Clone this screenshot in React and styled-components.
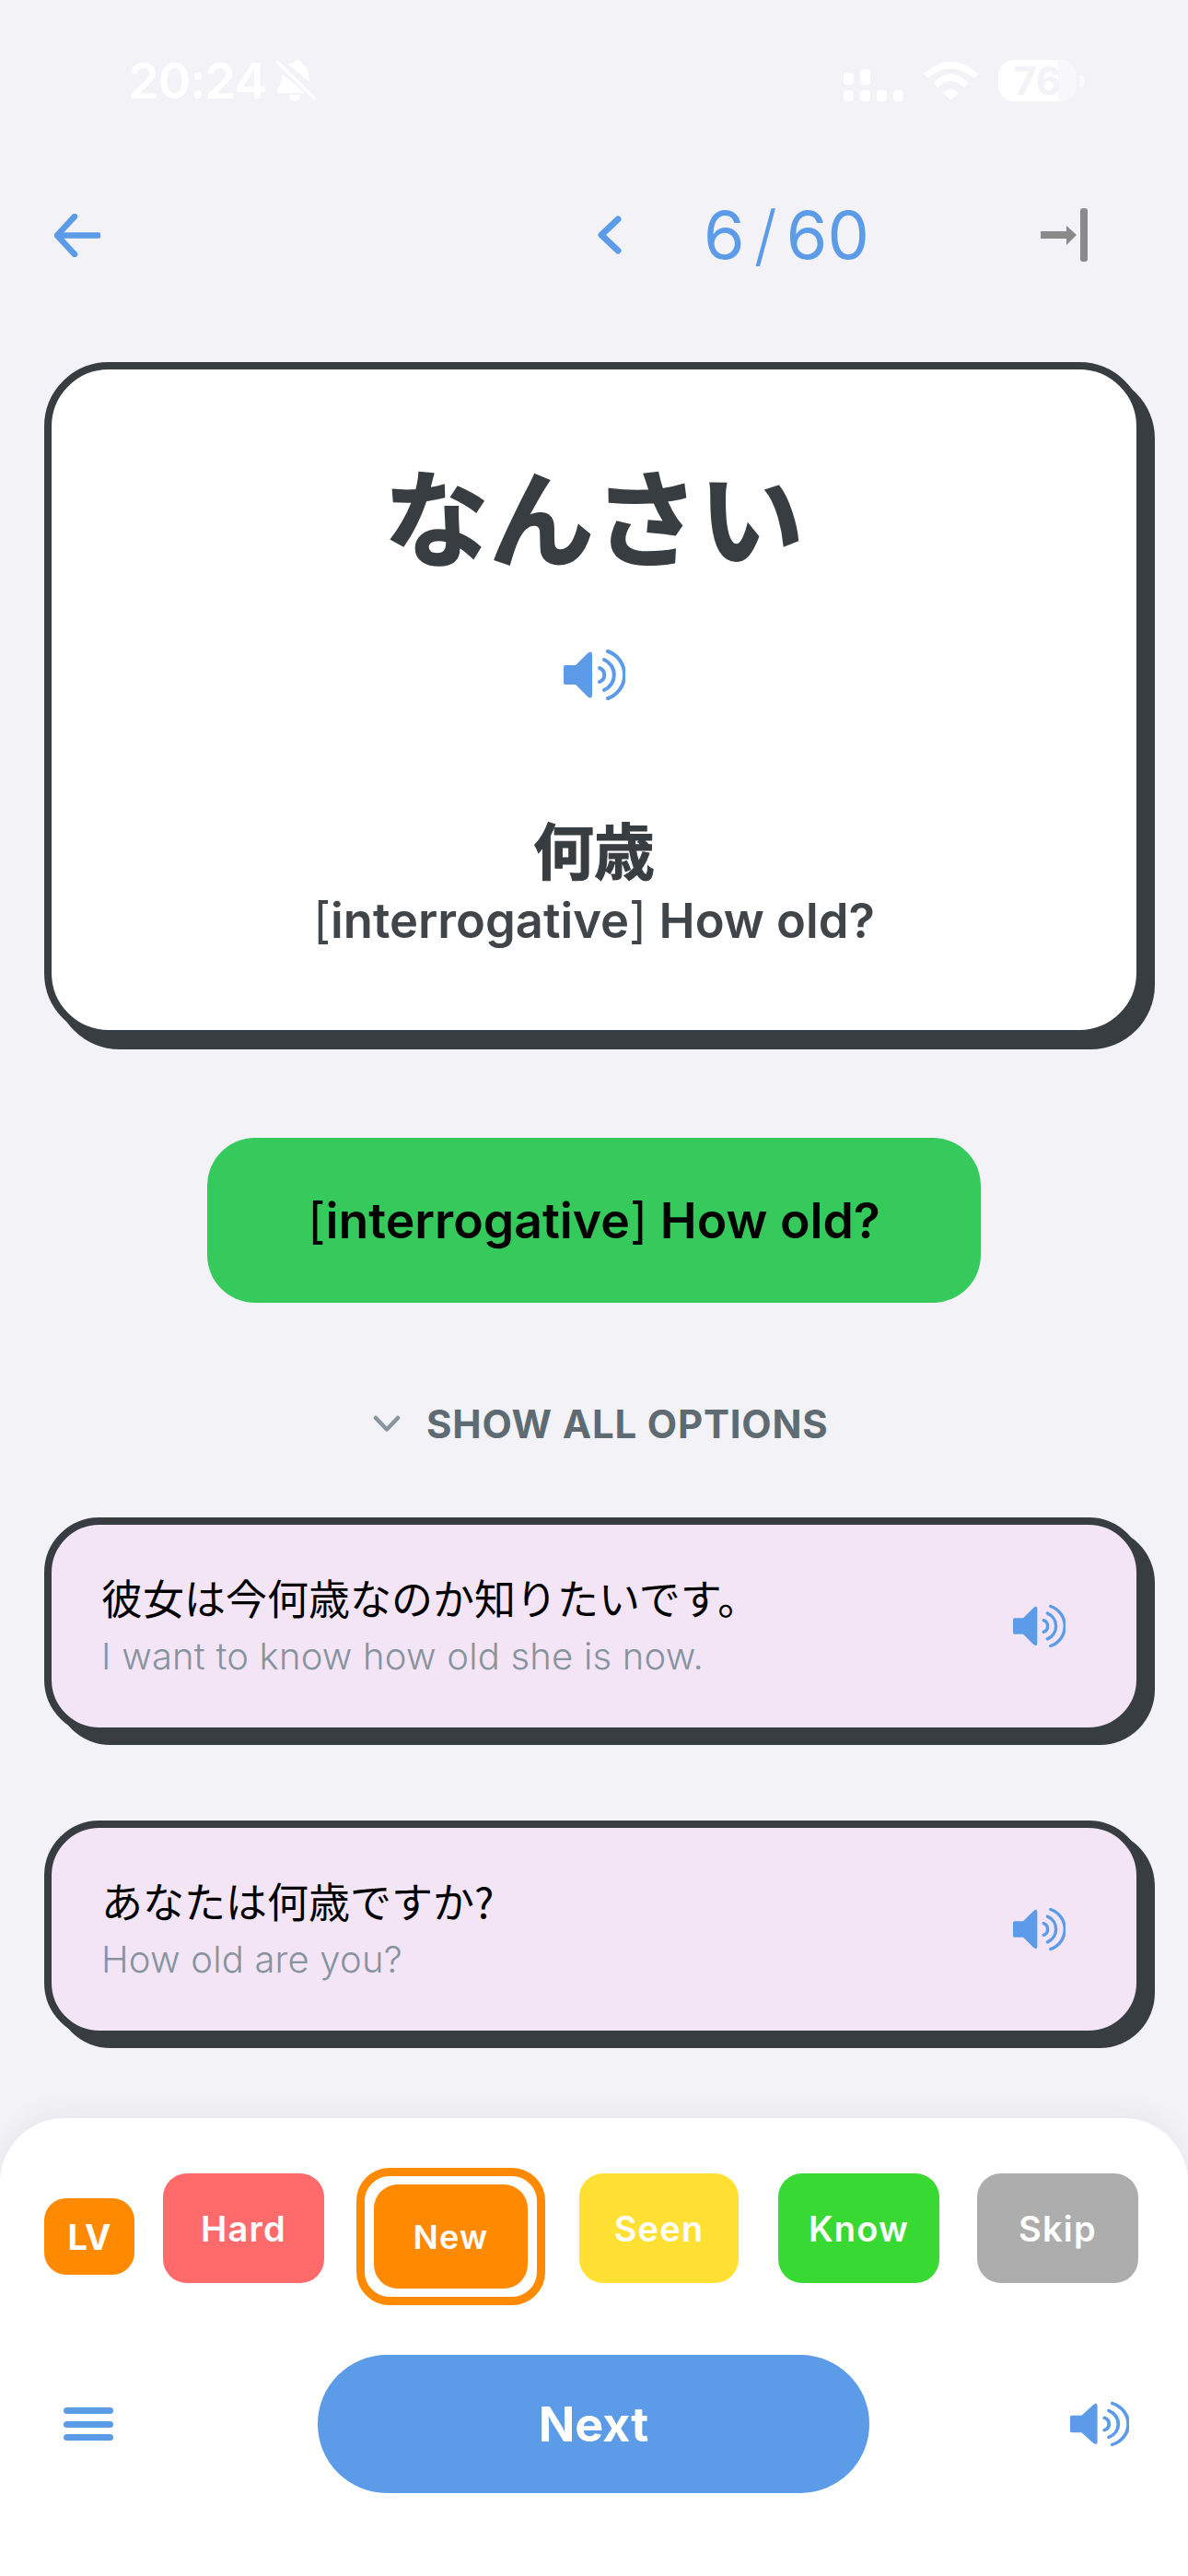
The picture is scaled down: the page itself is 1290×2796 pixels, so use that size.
import styled, { createGlobalStyle } from 'styled-components';

const BLUE = '#5b9be8';
const INK = '#383d41';
const BG = '#f2f2f7';
const FONT = '"Inter", "Noto Sans CJK JP", sans-serif';
const JP = '"Noto Sans CJK JP", "Inter", sans-serif';

const Global = createGlobalStyle`
  * { box-sizing: border-box; }
  html, body { margin: 0; padding: 0; background: ${BG}; }
  body { font-family: ${FONT}; }
`;

const Page = styled.div`
  width: 1290px;
  height: 2796px;
  overflow: hidden;
  background: ${BG};
  display: flex;
  flex-direction: column;
`;

const StatusBar = styled.div`
  display: flex;
  justify-content: space-between;
  align-items: center;
  height: 47px;
  margin-top: 64px;
  padding: 0 113px 0 139px;
  color: #fff;
`;

const StatusLeft = styled.div`
  display: flex;
  align-items: center;
  gap: 11px;
`;

const Time = styled.span`
  font-size: 54px;
  font-weight: 600;
  line-height: 47px;
  letter-spacing: -1px;
`;

const StatusRight = styled.div`
  display: flex;
  align-items: center;
`;

const Battery = styled.div`
  width: 85px;
  height: 45px;
  margin-left: 22px;
  border-radius: 17px;
  background: linear-gradient(90deg, #fff 65px, rgba(255, 255, 255, 0.45) 65px);
  color: ${BG};
  font-size: 42px;
  font-weight: 700;
  line-height: 45px;
  text-align: center;
`;

const BatteryNub = styled.div`
  width: 5px;
  height: 14px;
  margin-left: 3px;
  border-radius: 0 5px 5px 0;
  background: rgba(255, 255, 255, 0.6);
`;

const Nav = styled.div`
  display: grid;
  grid-template-columns: 589px 119px 363px 51px;
  align-items: center;
  height: 66px;
  margin-top: 111px;
  padding-left: 59px;
`;

const Counter = styled.div`
  margin-left: -3px;
  color: ${BLUE};
  font-size: 72px;
  font-weight: 400;
  line-height: 66px;
  white-space: nowrap;
`;

const Slash = styled.span`
  margin: 0 10px;
  font-weight: 300;
`;

const Card = styled.div`
  width: 1194px;
  height: 733px;
  margin: 105px 0 0 48px;
  border: 8px solid ${INK};
  border-radius: 70px;
  background: #fff;
  box-shadow: 12px 13px 0 ${INK};
  display: flex;
  flex-direction: column;
  align-items: center;
`;

const Reading = styled.h1`
  margin: 91px 0 0;
  color: ${INK};
  font-family: ${JP};
  font-size: 114px;
  font-weight: 700;
  line-height: 130px;
  -webkit-text-stroke: 1.5px ${INK};
`;

const CardSpeaker = styled.div`
  margin-top: 82px;
  height: 57px;
`;

const Kanji = styled.div`
  margin-top: 119px;
  color: ${INK};
  font-family: ${JP};
  font-size: 66px;
  font-weight: 700;
  line-height: 80px;
  -webkit-text-stroke: 1px ${INK};
`;

const Meaning = styled.div`
  margin-top: 9px;
  color: #3f4549;
  font-size: 52.5px;
  font-weight: 600;
  line-height: 60px;
`;

const Bracket = styled.span`
  font-weight: 400;
`;

const Answer = styled.div`
  width: 840px;
  height: 179px;
  margin: 109px 0 0 225px;
  border-radius: 52px;
  background: #36c95c;
  color: #000;
  font-size: 53.5px;
  font-weight: 600;
  display: flex;
  align-items: center;
  justify-content: center;
`;

const ShowAll = styled.div`
  display: flex;
  align-items: center;
  gap: 28px;
  margin: 107px 0 0 405px;
  height: 48px;
  color: #5f6b72;
  font-size: 42px;
  font-weight: 700;
  letter-spacing: 0.8px;
`;

const OptionList = styled.div`
  display: flex;
  flex-direction: column;
  gap: 93px;
  margin: 78px 0 0 48px;
`;

const Option = styled.div`
  width: 1194px;
  height: 236px;
  padding: 0 77px 0 54px;
  border: 8px solid ${INK};
  border-radius: 60px;
  background: #f3e5f5;
  box-shadow: 12px 11px 0 ${INK};
  display: flex;
  align-items: center;
  justify-content: space-between;
`;

const OptionText = styled.div`
  display: flex;
  flex-direction: column;
  gap: 11px;
  padding-bottom: 2px;
`;

const Sentence = styled.div`
  color: #000;
  font-family: ${JP};
  font-size: 45px;
  font-weight: 400;
  line-height: 56px;
`;

const Translation = styled.div`
  color: #87939f;
  font-size: 40px;
  font-weight: 300;
  line-height: 50px;
  letter-spacing: 0.2px;
`;

const Sheet = styled.div`
  margin-top: auto;
  height: 497px;
  padding: 54px 54px 0 48px;
  border-radius: 70px 70px 0 0;
  background: #fff;
  box-shadow: 0 -6px 30px rgba(0, 0, 0, 0.05);
`;

const Levels = styled.div`
  display: grid;
  grid-template-columns: 129px 210px 242px 216px 216px 175px;
  height: 149px;
`;

const Level = styled.div`
  display: flex;
  align-items: center;
  justify-content: center;
  border-radius: 26px;
  background: ${p => p.$color};
  color: #fff;
  font-size: ${p => (p.$inner ? 36 : 38)}px;
  font-weight: 600;
  letter-spacing: 1.2px;
  ${p => (p.$inner ? 'width: 100%; height: 100%;' : `width: ${p.$width || 175}px; height: 119px; margin-top: 6px;`)}
`;

const LevelBadge = styled.div`
  width: 98px;
  height: 83px;
  align-self: center;
  border-radius: 24px;
  background: #ff8a00;
  color: #fff;
  font-size: 38px;
  font-weight: 700;
  display: flex;
  align-items: center;
  justify-content: center;
`;

const Selected = styled.div`
  width: 205px;
  height: 149px;
  padding: 9px 10px;
  border: 9px solid #ff8a00;
  border-radius: 36px;
`;

const Actions = styled.div`
  display: grid;
  grid-template-columns: 276px 599px 1fr;
  align-items: center;
  height: 150px;
  margin: 54px 0 0 21px;
`;

const Burger = styled.div`
  display: flex;
  flex-direction: column;
  gap: 7.5px;
  width: 54px;
`;

const BurgerBar = styled.div`
  height: 7px;
  border-radius: 4px;
  background: ${BLUE};
`;

const Next = styled.div`
  height: 150px;
  border-radius: 75px;
  background: ${BLUE};
  color: #fff;
  font-size: 52px;
  font-weight: 700;
  display: flex;
  align-items: center;
  justify-content: center;
`;

const ActionSpeaker = styled.div`
  justify-self: end;
  height: 50px;
  margin-right: 10px;
`;

function Speaker({ width = 67, height = 57 }) {
  return (
    <svg width={width} height={height} viewBox="0 0 67 57" preserveAspectRatio="none" style={{ display: 'block' }}>
      <path d="M2 18 H13 L26 5 Q31 1 31 7 V50 Q31 56 26 52 L13 39 H2 Q0 39 0 37 V20 Q0 18 2 18Z" fill={BLUE} />
      <g fill="none" stroke={BLUE} strokeWidth="4" strokeLinecap="round">
        <path d="M39 21 A8 8 0 0 1 39 36" />
        <path d="M44 12 A18 18 0 0 1 44 45" />
        <path d="M48 3 A27 27 0 0 1 48 54" />
      </g>
    </svg>
  );
}

function BackArrow() {
  return (
    <svg width="50" height="47" viewBox="0 0 50 47">
      <path d="M22 3 L3 23.5 L22 44 M3 23.5 H48" fill="none" stroke={BLUE} strokeWidth="6.5" strokeLinecap="round" strokeLinejoin="round" />
    </svg>
  );
}

function PrevChevron() {
  return (
    <svg width="27" height="42" viewBox="0 0 27 42">
      <path d="M23 4 L5 21 L23 38" fill="none" stroke={BLUE} strokeWidth="7" strokeLinecap="round" strokeLinejoin="round" />
    </svg>
  );
}

function SkipEnd() {
  return (
    <svg width="51" height="58" viewBox="0 0 51 58" fill="#8a8a8a">
      <rect x="0" y="25" width="30" height="8" />
      <polygon points="28,19 39,29 28,40" />
      <rect x="43" y="0" width="8" height="58" rx="3" />
    </svg>
  );
}

function ChevronDown() {
  return (
    <svg width="30" height="19" viewBox="0 0 30 19">
      <path d="M3 3 L15 15.5 L27 3" fill="none" stroke="#87959f" strokeWidth="4.5" strokeLinecap="round" strokeLinejoin="round" />
    </svg>
  );
}

function MutedBell() {
  return (
    <svg width="42" height="46" viewBox="0 0 42 46" fill="#fff">
      <path d="M13 5 Q17 3 19 3 Q20 -1 24 0 Q28 1 28 4 Q35 8 35 18 L36 24 Z" />
      <path d="M6 15 L31 36 H3 Q0 35 1 32 Q6 26 6 15Z" />
      <path d="M14 38 H26 Q25 45 20 45 Q15 45 14 38Z" />
      <path d="M1 2 L41 41" stroke="#fff" strokeWidth="3.5" strokeLinecap="round" />
    </svg>
  );
}

function Signal() {
  return (
    <svg width="65" height="45" viewBox="0 0 65 45" fill="#fff">
      <rect x="54" y="0" width="11" height="27" rx="4" opacity="0.2" />
      <rect x="36" y="5" width="11" height="22" rx="4" opacity="0.2" />
      <rect x="18" y="10" width="11" height="17" rx="4" />
      <rect x="0" y="14" width="11" height="13" rx="4" />
      <rect x="0" y="33" width="11" height="12" rx="4" />
      <rect x="18" y="33" width="11" height="12" rx="4" />
      <rect x="36" y="33" width="11" height="12" rx="4" />
      <rect x="54" y="33" width="11" height="12" rx="4" />
    </svg>
  );
}

function Wifi() {
  return (
    <svg width="59" height="42" viewBox="0 0 59 42" fill="#fff" style={{ marginLeft: 22 }}>
      <path d="M0 13 Q29.5 -13 59 13 L55 18 Q29.5 -3 4 18 Z" />
      <path d="M10.5 23 Q29.5 3 48.5 23 L44 28 Q29.5 14 15 28 Z" />
      <path d="M21 34 Q29.5 26 38 34 L29.5 42 Z" />
    </svg>
  );
}

const Bracketed = ({ children }) => (
  <>
    <Bracket>[</Bracket>{children}<Bracket>]</Bracket> How old?
  </>
);

const options = [
  { jp: '彼女は今何歳なのか知りたいです。', en: 'I want to know how old she is now.' },
  { jp: 'あなたは何歳ですか?', en: 'How old are you?' },
];

const levels = [
  { label: 'Hard', color: '#ff6b6b' },
  { label: 'New', color: '#ff8a00', selected: true },
  { label: 'Seen', color: '#ffe033', width: 173 },
  { label: 'Know', color: '#38d932' },
  { label: 'Skip', color: '#adadad' },
];

export default function App() {
  return (
    <Page>
      <Global />
      <StatusBar>
        <StatusLeft>
          <Time>20:24</Time>
          <MutedBell />
        </StatusLeft>
        <StatusRight>
          <Signal />
          <Wifi />
          <Battery>76</Battery>
          <BatteryNub />
        </StatusRight>
      </StatusBar>

      <Nav>
        <BackArrow />
        <PrevChevron />
        <Counter>6<Slash>/</Slash>60</Counter>
        <SkipEnd />
      </Nav>

      <Card>
        <Reading>なんさい</Reading>
        <CardSpeaker><Speaker /></CardSpeaker>
        <Kanji>何歳</Kanji>
        <Meaning><Bracketed>interrogative</Bracketed></Meaning>
      </Card>

      <Answer><span><Bracketed>interrogative</Bracketed></span></Answer>

      <ShowAll>
        <ChevronDown />
        SHOW ALL OPTIONS
      </ShowAll>

      <OptionList>
        {options.map(o => (
          <Option key={o.en}>
            <OptionText>
              <Sentence>{o.jp}</Sentence>
              <Translation>{o.en}</Translation>
            </OptionText>
            <Speaker width={57} height={48} />
          </Option>
        ))}
      </OptionList>

      <Sheet>
        <Levels>
          <LevelBadge>LV</LevelBadge>
          {levels.map(l => (
            l.selected ? (
              <Selected key={l.label}>
                <Level $color={l.color} $inner>{l.label}</Level>
              </Selected>
            ) : (
              <Level key={l.label} $color={l.color} $width={l.width}>{l.label}</Level>
            )
          ))}
        </Levels>
        <Actions>
          <Burger>
            <BurgerBar />
            <BurgerBar />
            <BurgerBar />
          </Burger>
          <Next>Next</Next>
          <ActionSpeaker><Speaker width={64} height={50} /></ActionSpeaker>
        </Actions>
      </Sheet>
    </Page>
  );
}
